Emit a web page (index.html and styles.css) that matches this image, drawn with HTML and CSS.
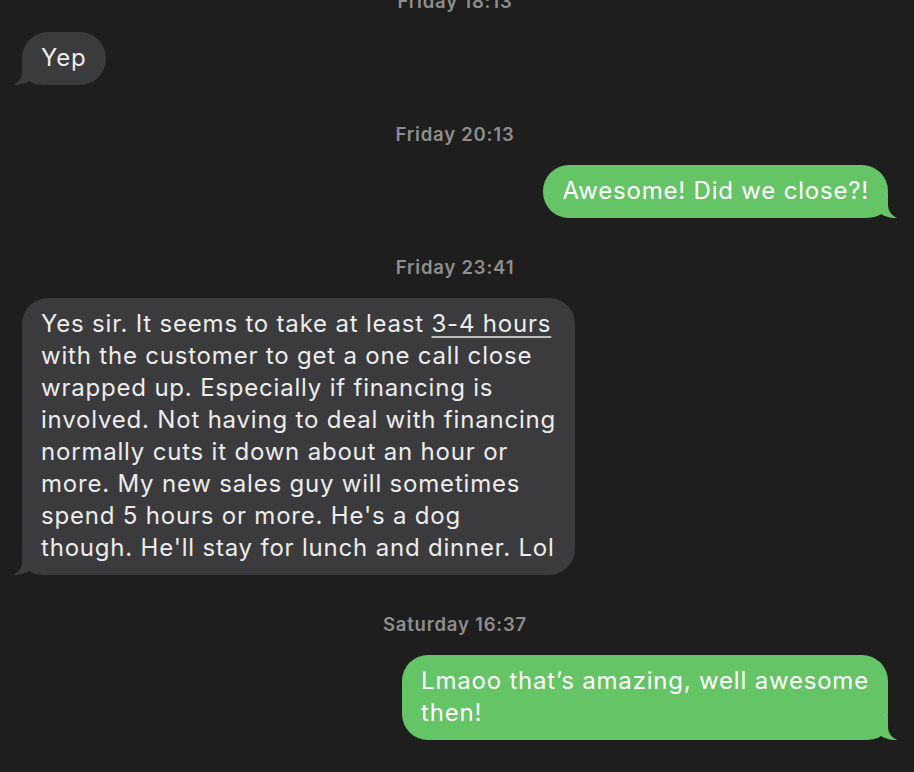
FILE: index.html
```html
<!DOCTYPE html>
<html lang="en">
<head>
    <meta charset="UTF-8">
    <title>Messages</title>
    <link rel="stylesheet" href="styles.css">
</head>
<body>
    <div class="thread">
        <div class="stamp first">Friday 18:13</div>
        <div class="row in">
            <div class="bubble">Yep
                <svg class="tail" width="34" height="24" viewBox="0 0 34 24"><path d="M9,0 L9,10 C9,17 6,21 0,24 C6,24.5 12,22.5 16,20 C20,23 26,24 34,24 L34,0 Z"/></svg>
            </div>
        </div>

        <div class="stamp">Friday 20:13</div>
        <div class="row out">
            <div class="bubble">Awesome! Did we close?!
                <svg class="tail" width="34" height="24" viewBox="0 0 34 24"><path d="M9,0 L9,10 C9,17 6,21 0,24 C6,24.5 12,22.5 16,20 C20,23 26,24 34,24 L34,0 Z"/></svg>
            </div>
        </div>

        <div class="stamp">Friday 23:41</div>
        <div class="row in">
            <div class="bubble">Yes sir. It seems to take at least <span class="link">3-4 hours</span><br>with the customer to get a one call close<br>wrapped up. Especially if financing is<br>involved. Not having to deal with financing<br>normally cuts it down about an hour or<br>more. My new sales guy will sometimes<br>spend 5 hours or more. He's a dog<br>though. He'll stay for lunch and dinner. Lol
                <svg class="tail" width="34" height="24" viewBox="0 0 34 24"><path d="M9,0 L9,10 C9,17 6,21 0,24 C6,24.5 12,22.5 16,20 C20,23 26,24 34,24 L34,0 Z"/></svg>
            </div>
        </div>

        <div class="stamp">Saturday 16:37</div>
        <div class="row out">
            <div class="bubble">Lmaoo that’s amazing, well awesome<br>then!
                <svg class="tail" width="34" height="24" viewBox="0 0 34 24"><path d="M9,0 L9,10 C9,17 6,21 0,24 C6,24.5 12,22.5 16,20 C20,23 26,24 34,24 L34,0 Z"/></svg>
            </div>
        </div>
    </div>
</body>
</html>
```

FILE: styles.css
```css
body {
    margin: 0;
    background: #1e1e1e;
    font-family: 'Inter', 'Liberation Sans', Arial, sans-serif;
    overflow: hidden;
}
.thread {
    display: flex;
    flex-direction: column;
    padding: 0 26px 0 22px;
    margin-top: -9px;
}
.stamp {
    text-align: center;
    color: #8e8e8e;
    font-size: 18.5px;
    font-weight: 600;
    letter-spacing: 0.8px;
    line-height: 20px;
    margin: 39px 0 21px 0;
}
.stamp.first {
    margin-top: 0;
}
.row {
    display: flex;
}
.row.in {
    justify-content: flex-start;
}
.row.out {
    justify-content: flex-end;
}
.bubble {
    position: relative;
    padding: 10px 19px 11px 19px;
    border-radius: 26px;
    font-size: 24px;
    letter-spacing: 0.8px;
    line-height: 32px;
    white-space: nowrap;
}
.in .bubble {
    background: #3b3b3d;
    color: #ececec;
}
.out .bubble {
    background: #65c466;
    color: #fff;
}
.tail {
    position: absolute;
    bottom: 0;
    z-index: -1;
}
.in .tail {
    left: -9px;
    fill: #3b3b3d;
}
.out .tail {
    right: -9px;
    fill: #65c466;
    transform: scaleX(-1);
}
.link {
    text-decoration: underline;
    text-decoration-color: #bdbdbd;
    text-decoration-thickness: 1.5px;
    text-underline-offset: 4px;
}
```
